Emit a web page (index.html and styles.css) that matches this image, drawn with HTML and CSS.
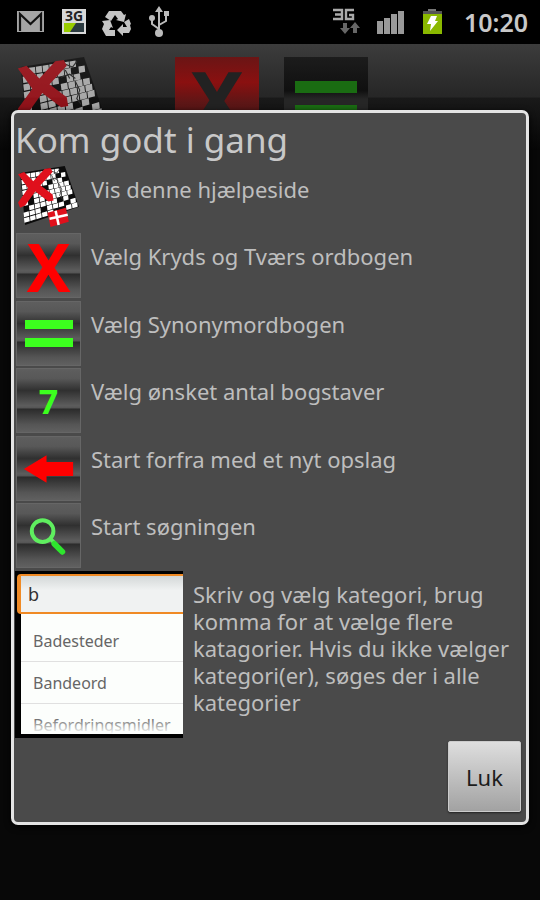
FILE: index.html
```html
<!DOCTYPE html>
<html lang="da">
<head>
    <meta charset="UTF-8">
    <meta name="viewport" content="width=device-width, initial-scale=1.0">
    <title>Kom godt i gang</title>
    <link rel="stylesheet" href="styles.css">
</head>
<body>

    <!-- Shared drawings -->
    <svg width="0" height="0" class="defs" aria-hidden="true">
        <symbol id="crossword" viewBox="0 0 64 64">
            <path d="M4 7 48 0l14 40-53 18z" fill="#0c0c0c"/>
            <g stroke="#fff" stroke-width=".88" stroke-dasharray=".88 .12">
                <path transform="matrix(4.7 -.75 .5 5 5 8)" d="M0 .5h8"/>
                <path transform="matrix(4.850 -.88 .5 5 5.300 13.400)" d="M0 .5h3M4 .5h3M8 .5h1"/>
                <path transform="matrix(5 -1 .6 5 5.700 18.800)" d="M0 .5h5M6 .5h2"/>
                <path transform="matrix(5.150 -1.140 .6 5 6 24.200)" d="M0 .5h3M5 .5h4"/>
                <path transform="matrix(5.300 -1.270 .6 5 6.400 29.600)" d="M0 .5h1M2 .5h7"/>
                <path transform="matrix(5.450 -1.400 .6 5 6.700 35)" d="M0 .5h1M2 .5h2M5 .5h4"/>
                <path transform="matrix(5.600 -1.530 .6 5 7.100 40.400)" d="M1 .5h5M7 .5h1"/>
                <path transform="matrix(5.750 -1.660 .6 5 7.400 45.800)" d="M0 .5h3M4 .5h3M8 .5h1"/>
                <path transform="matrix(5.900 -1.790 .6 5 7.800 51.200)" d="M0 .5h5M7 .5h2"/>
            </g>
            <g fill="none" stroke="#333" stroke-width=".8">
                <path d="M31 10l4-5 5 2 3-4M32 14l6-2 4 3M42 17l3 6-2 6 3 4M35 9l3 6"/>
            </g>
            <path d="M2 8l6-2 9 9L28 3l6-1 2 4-12 13 12 9 1 6-5 1-13-10-10 14-5 2-2-5 10-14z" fill="#e0101c"/>
        </symbol>
    </svg>

    <!-- Status bar -->
    <div class="status-bar">
        <svg class="status-icons" viewBox="0 0 160 34" width="160" height="34">
            <path d="M1 6h27v21H1z" fill="#a5a5a5"/>
            <path d="M4 26V9l10.500 10L25 9v17" fill="none" stroke="#111" stroke-width="2.200"/>
            <path d="M46 4h24v25H46z" fill="#d8d8d8"/>
            <text x="58" y="16" text-anchor="middle" class="net-label">3G</text>
            <path d="M48 18h20v9H48z" fill="#2b3a40"/>
            <path d="M48 18h12l-6 9h-6z" fill="#9c0"/>
            <g fill="#c4c4c4">
                <path d="M93 6h12l3 4 2-1-2 8-8-2 2-1-3-4-4 6-6-4z"/>
                <path d="M108 17l5-3 2 5-1 1 1 4-2 4h-6v3l-6-6 6-6v3h4z"/>
                <path d="M86 16l8-1 3 8-2-1-2 3h6v6h-9l-4-7 2-5z"/>
            </g>
            <g fill="none" stroke="#bbb" stroke-width="2">
                <path d="M143 30V5M143 24l-7-5v-6M143 20l7-4v-5"/>
            </g>
            <path d="M143 1l4 6h-8zM148 6h5v5h-5z" fill="#bbb"/>
            <circle cx="136" cy="13" r="3" fill="#bbb"/>
            <circle cx="143" cy="28" r="4" fill="#bbb"/>
        </svg>
        <div class="status-right">
            <svg viewBox="0 0 116 30" width="116" height="30">
                <g fill="none" stroke="#aaa" stroke-width="2.400">
                    <path d="M1 3h9v9H1M3 7.500h7M22 3h-8v9h7V8h-4"/>
                </g>
                <path d="M11 16h4v5h3l-5 6-5-6h3zM21 26v-5h-3l5-6 5 6h-3v5z" fill="#666"/>
                <g fill="#999">
                    <path d="M45 14h6v13h-6zM52 11h6v16h-6zM59 7h6v20h-6zM66 4h6v23h-6z"/>
                </g>
                <path d="M96 2h8v3h-8z" fill="#777"/>
                <path d="M91 5h19v22H91z" fill="#8ab800"/>
                <path d="M91 4h19v3H91z" fill="#555"/>
                <path d="M99 9h6l-2 5h3l-8 10 1-7h-4z" fill="#fff"/>
            </svg>
            <span class="clock">10:20</span>
        </div>
    </div>

    <!-- App toolbar, dimmed behind the dialog -->
    <div class="toolbar">
        <svg class="toolbar-logo" width="92" height="92" aria-hidden="true"><use href="#crossword"/></svg>
        <button type="button" class="tool tool-cross">X</button>
        <button type="button" class="tool tool-equal" aria-label="Synonymordbog"><i></i><i></i></button>
    </div>

    <!-- Help dialog -->
    <div class="overlay">
        <div class="dialog" role="dialog" aria-labelledby="dialog-title">
            <h1 id="dialog-title">Kom godt i gang</h1>
            <ul class="help-list">
                <li>
                    <svg class="help-logo" viewBox="0 0 64 64" width="65" height="65" aria-hidden="true">
                        <use href="#crossword" width="64" height="64"/>
                        <path d="M31 46l18-5 3 14-18 5z" fill="#e0101c"/>
                        <path d="M39 44l3 14M33 52l18-4" stroke="#fff" stroke-width="2.500"/>
                    </svg>
                    <p>Vis denne hjælpeside</p>
                </li>
                <li>
                    <span class="tile tile-cross">X</span>
                    <p>Vælg Kryds og Tværs ordbogen</p>
                </li>
                <li>
                    <span class="tile tile-equal"><i></i><i></i></span>
                    <p>Vælg Synonymordbogen</p>
                </li>
                <li>
                    <span class="tile tile-number">7</span>
                    <p>Vælg ønsket antal bogstaver</p>
                </li>
                <li>
                    <span class="tile">
                        <svg viewBox="0 0 64 64" width="64" height="64">
                            <path d="M7 32l23-14v7h27v14H30v7z" fill="#f00"/>
                        </svg>
                    </span>
                    <p>Start forfra med et nyt opslag</p>
                </li>
                <li>
                    <span class="tile">
                        <svg viewBox="0 0 64 64" width="64" height="64">
                            <circle cx="26" cy="27" r="11" fill="none" stroke="#5fee5f" stroke-width="4"/>
                            <path d="M34 35l4 4" stroke="#5fee5f" stroke-width="4"/>
                            <path d="M38 40l8 8" stroke="#2ee62e" stroke-width="6" stroke-linecap="round"/>
                        </svg>
                    </span>
                    <p>Start søgningen</p>
                </li>
                <li>
                    <div class="suggest">
                        <input type="text" value="b" aria-label="Kategori">
                        <ul class="suggest-list">
                            <li>Badesteder</li>
                            <li>Bandeord</li>
                            <li>Befordringsmidler</li>
                        </ul>
                    </div>
                    <p>Skriv og vælg kategori, brug komma for at vælge flere katagorier. Hvis du ikke vælger kategori(er), søges der i alle kategorier</p>
                </li>
            </ul>
            <div class="dialog-actions">
                <button type="button" class="close-button">Luk</button>
            </div>
        </div>
    </div>

</body>
</html>
```
FILE: styles.css
```css
/* Global Styles */
* {
    margin: 0;
    padding: 0;
    box-sizing: border-box;
    font-family: 'Noto Sans', 'Open Sans', sans-serif;
}

body {
    position: relative;
    min-height: 100vh;
    background: #080808;
    color: #bebebe;
}

ul {
    list-style: none;
}

svg {
    display: block;
}

.defs {
    position: absolute;
}

/* Status Bar */
.status-bar {
    display: flex;
    justify-content: space-between;
    align-items: center;
    height: 44px;
    padding: 0 12px 0 16px;
    background: #000;
}

.status-right {
    display: flex;
    align-items: center;
    gap: 16px;
}

.net-label {
    font-size: 14px;
    font-weight: bold;
    fill: #222;
}

.clock {
    font-size: 25px;
    font-weight: 600;
    color: #c8c8c8;
}

/* Toolbar */
.toolbar {
    display: flex;
    align-items: flex-start;
    height: 106px;
    padding: 13px 16px 0 15px;
    background: linear-gradient(#3c3c3c, #262626 50%, #191919 51%, #060606);
    overflow: hidden;
}

.toolbar-logo {
    margin-right: 68px;
    opacity: 0.6;
}

.tool {
    width: 84px;
    height: 84px;
    margin-right: 25px;
    border: none;
}

.tool-cross {
    background: linear-gradient(#6a1515, #8a1010 30%, #5c1616 55%, #4c1010);
    color: #222;
    font-size: 80px;
    font-weight: bold;
    line-height: 72px;
}

.tool-equal {
    display: flex;
    flex-direction: column;
    align-items: center;
    justify-content: center;
    gap: 12px;
    background: linear-gradient(#1c1c1c, #101010 40%, #262626 50%);
}

.tool-equal i {
    width: 62px;
    height: 12px;
    background: #1a6c12;
}

/* Dialog */
.overlay {
    position: absolute;
    inset: 0;
    padding: 110px 11px 75px;
}

.dialog {
    padding: 0 5px 10px 1px;
    background: #4a4a4a;
    border: 3px solid #e4e4e4;
    border-radius: 7px;
    box-shadow: 0 2px 6px #000;
}

h1 {
    height: 53px;
    font-size: 35px;
    font-weight: normal;
    line-height: 54px;
    color: #c8c8c8;
}

.help-list > li {
    display: flex;
    gap: 10px;
    min-height: 67px;
}

.help-list > li:nth-child(even) {
    min-height: 68px;
}

.help-list p {
    flex: 1;
    padding-top: 10px;
    font-size: 22px;
    line-height: 27px;
}

.help-logo,
.tile {
    flex: none;
    width: 65px;
    height: 65px;
    margin-left: 1px;
}

.tile {
    display: flex;
    align-items: center;
    justify-content: center;
    border: 1px solid #666;
    background: linear-gradient(#5e5e5e, #585858 15%, #303030 34%, #5c5c5c 58%, #585858 61%, #2c2c2c 64%, #555 88%, #606060);
    font-weight: bold;
}

.tile-cross {
    color: #f00;
    font-size: 66px;
    line-height: 64px;
}

.tile-number {
    color: #3cff1e;
    font-size: 34px;
    line-height: 64px;
}

.tile-equal {
    flex-direction: column;
    gap: 9px;
}

.tile-equal i {
    width: 48px;
    height: 9px;
    background: #3cff1e;
}

/* Category Suggestions */
.suggest {
    flex: none;
    width: 168px;
    height: 167px;
    padding: 3px 0 4px 2px;
    background: #000;
}

.suggest input {
    display: block;
    width: 100%;
    height: 40px;
    padding-left: 7px;
    border: solid #f08a24;
    border-width: 2px 0 2px 4px;
    border-radius: 4px 0 0 4px;
    background: linear-gradient(#d4d8d8, #f0f2f2 40%);
    color: #333;
    font-size: 18px;
    outline: none;
}

.suggest-list {
    position: relative;
    height: 120px;
    margin-left: 4px;
    padding-top: 6px;
    background: #fcfefc;
    overflow: hidden;
}

.suggest-list li {
    height: 42px;
    padding-left: 12px;
    border-bottom: 1px solid #e0e0e0;
    color: #666;
    font-size: 16px;
    line-height: 42px;
}

/* Fade over the cut-off last entry */
.suggest-list::after {
    content: '';
    position: absolute;
    inset: auto 0 0;
    height: 16px;
    background: linear-gradient(rgba(252, 254, 252, 0), #fcfefc);
}

/* Close Button */
.dialog-actions {
    display: flex;
    justify-content: flex-end;
    padding-top: 3px;
}

.close-button {
    width: 73px;
    height: 71px;
    border: 1px solid #ccc;
    border-radius: 2px;
    background: linear-gradient(#dedede, #a2a2a2);
    box-shadow: 0 1px 2px #222;
    color: #1c1c1c;
    font-size: 22px;
    cursor: pointer;
}
```
